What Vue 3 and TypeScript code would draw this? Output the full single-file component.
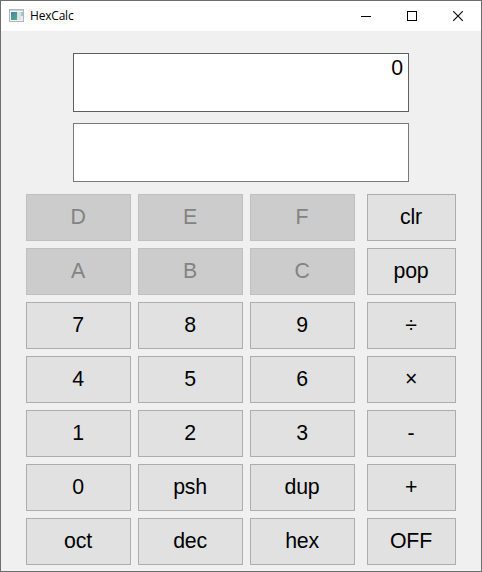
<script setup lang="ts">
import { ref } from 'vue'

interface Key {
  label: string
  disabled?: boolean
}

const display = ref('0')
const stackTop = ref('')

const rows: Key[][] = [
  [{ label: 'D', disabled: true }, { label: 'E', disabled: true }, { label: 'F', disabled: true }, { label: 'clr' }],
  [{ label: 'A', disabled: true }, { label: 'B', disabled: true }, { label: 'C', disabled: true }, { label: 'pop' }],
  [{ label: '7' }, { label: '8' }, { label: '9' }, { label: '÷' }],
  [{ label: '4' }, { label: '5' }, { label: '6' }, { label: '×' }],
  [{ label: '1' }, { label: '2' }, { label: '3' }, { label: '-' }],
  [{ label: '0' }, { label: 'psh' }, { label: 'dup' }, { label: '+' }],
  [{ label: 'oct' }, { label: 'dec' }, { label: 'hex' }, { label: 'OFF' }],
]
</script>

<template>
  <div class="window">
    <header class="titlebar">
      <svg class="app-icon" width="16" height="13" viewBox="0 0 16 13">
        <defs>
          <linearGradient id="pane" x1="0" y1="0" x2="0.6" y2="1">
            <stop offset="0" stop-color="#4a7fb0" />
            <stop offset="1" stop-color="#55a684" />
          </linearGradient>
        </defs>
        <rect x="0.5" y="0.5" width="14" height="12" fill="#f1f3f5" stroke="#b0b6bb" />
        <rect x="1" y="1" width="13" height="1" fill="#cdd2d6" />
        <rect x="2" y="3" width="6" height="8" fill="url(#pane)" />
        <rect x="8" y="3" width="4" height="8" fill="#dde2e5" />
        <rect x="12" y="3" width="2" height="4" fill="#9cc9bb" />
        <rect x="12" y="7" width="2" height="4" fill="#e9eeec" />
      </svg>
      <span class="title">HexCalc</span>
      <div class="controls">
        <button class="control" aria-label="Minimize">
          <svg width="11" height="11" shape-rendering="crispEdges"><rect x="0" y="5" width="10" height="1" /></svg>
        </button>
        <button class="control" aria-label="Maximize">
          <svg width="11" height="11"><rect x="0.5" y="0.5" width="9" height="9" fill="none" stroke="#000" /></svg>
        </button>
        <button class="control" aria-label="Close">
          <svg width="11" height="11"><path d="M0.2 0.2 9.8 9.8M9.8 0.2 0.2 9.8" fill="none" stroke="#000" stroke-width="1.1" /></svg>
        </button>
      </div>
    </header>
    <main class="content">
      <div class="displays">
        <div class="display primary">{{ display }}</div>
        <div class="display">{{ stackTop }}</div>
      </div>
      <div class="keypad">
        <template v-for="(row, r) in rows" :key="r">
          <button v-for="key in row" :key="key.label" class="key" :disabled="key.disabled">{{ key.label }}</button>
        </template>
      </div>
    </main>
  </div>
</template>

<style>
body {
  margin: 0;
  background: #f0f0f0;
}
</style>

<style scoped>
.window {
  box-sizing: border-box;
  width: 482px;
  height: 572px;
  border: 1px solid #6e6e6e;
  background: #f0f0f0;
  overflow: hidden;
  font-family: "Liberation Sans", Arial, sans-serif;
  color: #000;
}
.titlebar {
  display: flex;
  align-items: center;
  height: 30px;
  padding-left: 8px;
  background: #fff;
}
.app-icon {
  display: block;
  margin-top: -2px;
}
.title {
  margin-left: 5px;
  font: 12px/16px "Open Sans", "Noto Sans", sans-serif;
  letter-spacing: -0.2px;
}
.controls {
  display: flex;
  margin-left: auto;
}
.control {
  display: flex;
  align-items: center;
  justify-content: center;
  width: 46px;
  height: 30px;
  padding: 0;
  border: 0;
  background: transparent;
}
.control svg {
  display: block;
}
.content {
  padding: 22px 25px 0;
}
.displays {
  display: flex;
  flex-direction: column;
  gap: 11px;
  width: 336px;
  margin-left: 47px;
}
.display {
  box-sizing: border-box;
  height: 59px;
  padding: 2px 5px;
  border: 1px solid #7a7a7a;
  background: #fff;
  font-size: 21.3px;
  line-height: 24px;
  text-align: right;
}
.primary {
  border-color: #5f5f5f;
}
.keypad {
  display: grid;
  grid-template-columns: 112px 112px 117px 89px;
  grid-auto-rows: 47px;
  row-gap: 7px;
  margin-top: 12px;
}
.key {
  width: 105px;
  padding: 0 1px 1px 0;
  border: 1px solid #adadad;
  background: #e1e1e1;
  color: #000;
  font: 21.3px/24px "Liberation Sans", Arial, sans-serif;
  letter-spacing: -0.2px;
  text-align: center;
}
.key:nth-child(4n) {
  width: 89px;
}
.key:disabled {
  border-color: #bfbfbf;
  background: #cccccc;
  color: #838383;
}
</style>
